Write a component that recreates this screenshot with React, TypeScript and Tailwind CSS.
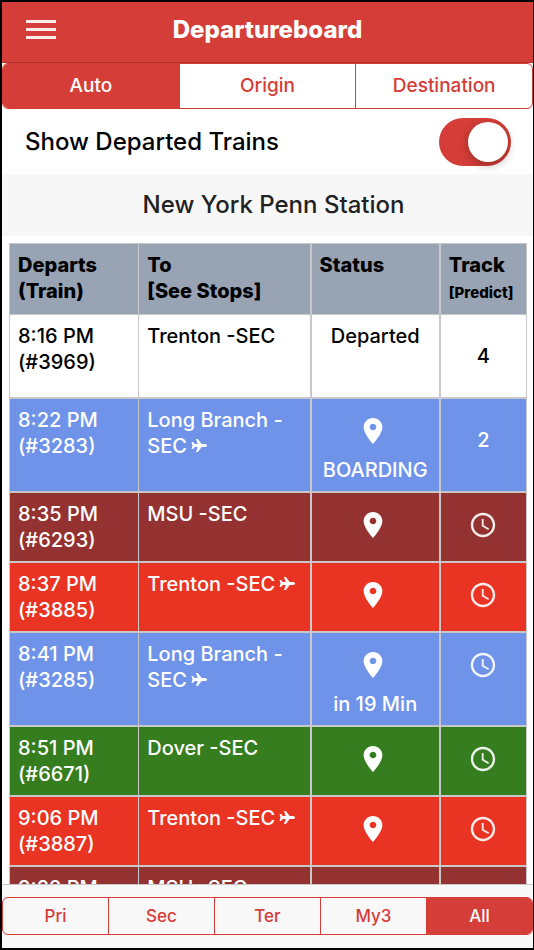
import { useState } from "react";
import { IoMdPin, IoMdTime } from "react-icons/io";

type Train = {
  time: string;
  number: string;
  to: string;
  airport?: boolean;
  status?: string;
  departed?: boolean;
  track?: string;
  color: string;
};

const trains: Train[] = [
  {
    time: "8:16 PM",
    number: "3969",
    to: "Trenton -SEC",
    status: "Departed",
    departed: true,
    track: "4",
    color: "bg-white text-black",
  },
  {
    time: "8:22 PM",
    number: "3283",
    to: "Long Branch -SEC",
    airport: true,
    status: "BOARDING",
    track: "2",
    color: "bg-[#6e93e8] text-white",
  },
  {
    time: "8:35 PM",
    number: "6293",
    to: "MSU -SEC",
    color: "bg-[#933230] text-white",
  },
  {
    time: "8:37 PM",
    number: "3885",
    to: "Trenton -SEC",
    airport: true,
    color: "bg-[#e93323] text-white",
  },
  {
    time: "8:41 PM",
    number: "3285",
    to: "Long Branch -SEC",
    airport: true,
    status: "in 19 Min",
    color: "bg-[#6e93e8] text-white",
  },
  {
    time: "8:51 PM",
    number: "6671",
    to: "Dover -SEC",
    color: "bg-[#357d1f] text-white",
  },
  {
    time: "9:06 PM",
    number: "3887",
    to: "Trenton -SEC",
    airport: true,
    color: "bg-[#e93323] text-white",
  },
  {
    time: "9:22 PM",
    number: "6295",
    to: "MSU -SEC",
    color: "bg-[#933230] text-white",
  },
];

type SegmentProps = {
  items: string[];
  active: string;
  onChange: (item: string) => void;
  size: string;
};

const Segment = ({ items, active, onChange, size }: SegmentProps) => (
  <div className="flex rounded-md border border-[#d53d38] divide-x divide-[#d53d38]">
    {items.map((item) => (
      <button
        key={item}
        type="button"
        onClick={() => onChange(item)}
        className={`flex-1 basis-0 font-medium first:rounded-l-[5px] last:rounded-r-[5px] ${size} ${
          item === active ? "bg-[#d53d38] text-white" : "text-[#d53d38]"
        }`}
      >
        {item}
      </button>
    ))}
  </div>
);

const Plane = () => (
  <svg
    width="16"
    height="14"
    viewBox="0 0 16 14"
    fill="currentColor"
    className="ml-1 inline align-baseline"
    aria-label="Airport stop"
  >
    <path d="M16 6.500c0-1-1.300-1.500-2.500-1.500h-2.800L6.800 0H5l1.700 5H3.800L2 3H.5l1 3.500-1 3.500H2l1.800-2h2.900L5 13h1.800l3.900-5h2.800c1.200 0 2.500-.5 2.500-1.500Z" />
  </svg>
);

const TrainRow = ({ train }: { train: Train }) => {
  const cell = "border-b-2 border-[#c8c8c8] p-2 align-top";

  return (
    <tr className={train.color}>
      <td className={`${cell} border-r`}>
        {train.time}
        <br />
        (#{train.number})
      </td>
      <td className={`${cell} border-r-2`}>
        {train.to}
        {train.airport && <Plane />}
      </td>
      <td className={`${cell} border-r-2 text-center`}>
        {!train.departed && (
          <div className="mb-0.5 flex h-12 items-center justify-center pr-1">
            <IoMdPin size={30} />
          </div>
        )}
        {train.status}
      </td>
      <td className={`${cell} border-r text-center`}>
        {train.track ? (
          <div className="py-5">{train.track}</div>
        ) : (
          <div className="flex h-12 items-center justify-center">
            <IoMdTime size={30} />
          </div>
        )}
      </td>
    </tr>
  );
};

const App = () => {
  const [mode, setMode] = useState("Auto");
  const [filter, setFilter] = useState("All");
  const [showDeparted, setShowDeparted] = useState(true);

  const visible = trains.filter((t) => showDeparted || !t.departed);
  const head = "border-b border-[#c8c8c8] p-2 align-top font-extrabold";

  return (
    <div className="flex h-screen flex-col border-y-2 border-l-2 border-r border-black bg-white font-[Inter,sans-serif] text-black">
      <header className="grid grid-cols-[80px_1fr_80px] items-center border-b border-[#ad302d] bg-[#d53d38] text-white">
        <button type="button" aria-label="Menu" className="pt-2.5 pb-3 pl-6">
          <svg width="32" height="32" viewBox="0 0 32 32" fill="currentColor">
            <rect x="0" y="5" width="30" height="3" opacity="0.9" />
            <rect x="0" y="13" width="30" height="3" opacity="0.9" />
            <rect x="0" y="21" width="30" height="3" opacity="0.9" />
          </svg>
        </button>
        <h1 className="pt-2.5 pb-3.5 text-center text-2xl leading-9 font-extrabold">
          Departureboard
        </h1>
      </header>

      <Segment
        items={["Auto", "Origin", "Destination"]}
        active={mode}
        onChange={setMode}
        size="h-11 text-[19px]"
      />

      <label className="flex items-center justify-between pt-[9px] pr-[22px] pb-2 pl-[23px] text-2xl font-medium">
        Show Departed Trains
        <input
          type="checkbox"
          className="peer sr-only"
          checked={showDeparted}
          onChange={(e) => setShowDeparted(e.target.checked)}
        />
        <span className="flex h-12 w-18 items-center rounded-full bg-gray-300 p-[3px] peer-checked:justify-end peer-checked:bg-[#d53d38]">
          <span className="size-10 rounded-full bg-white shadow-[0_3px_10px_rgba(0,0,0,0.3)]" />
        </span>
      </label>

      <h2 className="bg-[#f7f7f7] py-[13px] pr-2 pl-5 text-center text-2xl leading-9 font-medium text-[#222]">
        New York Penn Station
      </h2>

      <main className="min-h-0 flex-1 overflow-y-auto pt-[7px] pr-1.5 pl-[7px] [scrollbar-width:none]">
        <table className="w-full table-fixed border-separate border-spacing-0 border-t border-l border-[#c8c8c8] text-xl leading-[26px] font-medium">
          <thead className="bg-[#98a3b3] text-left">
            <tr>
              <th className={`${head} w-1/4 border-r`}>
                Departs
                <br />
                (Train)
              </th>
              <th className={`${head} w-1/3 border-r-2`}>
                To
                <br />
                [See Stops]
              </th>
              <th className={`${head} w-1/4 border-r-2`}>Status</th>
              <th className={`${head} w-1/6 border-r`}>
                Track
                <br />
                <span className="text-[15px] leading-[26px]">[Predict]</span>
              </th>
            </tr>
          </thead>
          <tbody>
            {visible.map((train) => (
              <TrainRow key={train.number} train={train} />
            ))}
          </tbody>
        </table>
      </main>

      <footer className="border-t border-[#c8c8c8] bg-[#f8f8f8] pt-3 pb-[13px]">
        <Segment
          items={["Pri", "Sec", "Ter", "My3", "All"]}
          active={filter}
          onChange={setFilter}
          size="h-9 pt-0.5 text-[17px]"
        />
      </footer>
    </div>
  );
};

export default App;
